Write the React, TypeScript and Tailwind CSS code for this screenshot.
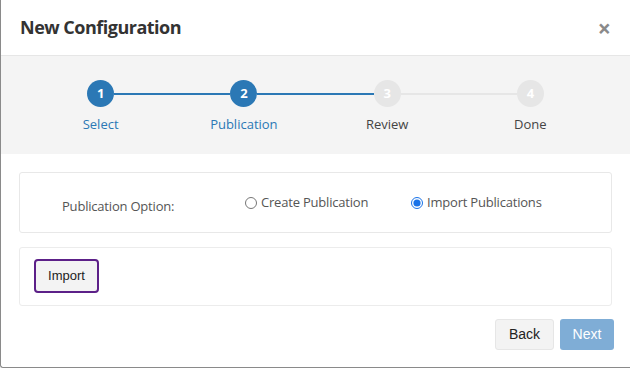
import React from "react";

type Step = { n: number; label: string; done: boolean };

const steps: Step[] = [
  { n: 1, label: "Select", done: true },
  { n: 2, label: "Publication", done: true },
  { n: 3, label: "Review", done: false },
  { n: 4, label: "Done", done: false },
];

const StepItem: React.FC<{ step: Step; index: number }> = ({ step, index }) => {
  // line left of circle is blue when this step is done or the previous one is
  const leftLine = index === 0 ? "bg-transparent" : index <= 2 ? "bg-[#2b78b5]" : "bg-[#e6e6e6]";
  const rightLine = index === steps.length - 1 ? "bg-transparent" : index <= 1 ? "bg-[#2b78b5]" : "bg-[#e6e6e6]";
  return (
    <div className="flex flex-col items-center">
      <div className="flex w-full items-center">
        <div className={`h-[2px] flex-1 ${leftLine}`}></div>
        <div
          className={`flex h-[27px] w-[27px] items-center justify-center rounded-full text-[13px] font-bold text-white ${
            step.done ? "bg-[#2b78b5]" : "bg-[#e6e6e6]"
          }`}
        >
          {step.n}
        </div>
        <div className={`h-[2px] flex-1 ${rightLine}`}></div>
      </div>
      <div
        className={`mt-[8px] text-[13px] leading-[18px] ${step.done ? "font-medium text-[#2b78b5]" : "text-[#444]"}`}
      >
        {step.label}
      </div>
    </div>
  );
};

const App: React.FC = () => {
  return (
    <div
      className="flex h-[368px] w-[630px] flex-col rounded-bl-[3px] border-b border-l border-[#8a8a8a] bg-white"
      style={{ fontFamily: '"Open Sans", "Noto Sans", sans-serif' }}
    >
      <div className="flex h-[56px] shrink-0 items-center justify-between border-b border-[#e6e6e6] pl-[19px] pr-[19px]">
        <h2 className="pb-[1px] text-[18px] font-bold tracking-[-0.5px] text-[#333]">New Configuration</h2>
        <span className="pt-[2px] text-[23px] font-bold leading-none text-[#8a8a8a]">×</span>
      </div>

      <div className="grid h-[98px] shrink-0 grid-cols-4 bg-[#f4f4f4] px-[28px] pt-[24px]">
        {steps.map((s, i) => (
          <StepItem key={s.n} step={s} index={i} />
        ))}
      </div>

      <div className="mx-[18px] mt-[18px] flex h-[61px] items-center rounded-[3px] border border-[#e8e8e8] text-[13px] tracking-[-0.2px]">
        <div className="w-[225px] pl-[42px] pt-[9px] text-[#555]">Publication Option:</div>
        <label className="flex w-[166px] items-center gap-[4px] text-[#555]">
          <input type="radio" name="opt" readOnly className="m-0 h-[12px] w-[12px]" />
          Create Publication
        </label>
        <label className="flex items-center gap-[4px] text-[#555]">
          <input type="radio" name="opt" readOnly checked className="m-0 h-[12px] w-[12px] accent-[#1a73e8]" />
          Import Publications
        </label>
      </div>

      <div className="mx-[18px] mt-[14px] h-[59px] rounded-[3px] border border-[#ececec] pl-[14px] pt-[11px]">
        <button
          className="h-[34px] w-[65px] rounded-[4px] border-2 border-[#5c2088] bg-[#f3f3f3] text-[13px] text-[#222]"
          style={{ fontFamily: '"Liberation Sans", Arial, sans-serif' }}
        >
          Import
        </button>
      </div>

      <div
        className="mr-[16px] mt-[13px] flex justify-end gap-[6px] text-[14px]"
        style={{ fontFamily: '"Liberation Sans", Arial, sans-serif' }}
      >
        <button className="h-[31px] w-[59px] rounded-[3px] border border-[#e6e6e6] bg-[#f3f3f3] text-[#222]">Back</button>
        <button className="h-[31px] w-[54px] rounded-[3px] bg-[#7fadd6] text-white">Next</button>
      </div>
    </div>
  );
};

export default App;
